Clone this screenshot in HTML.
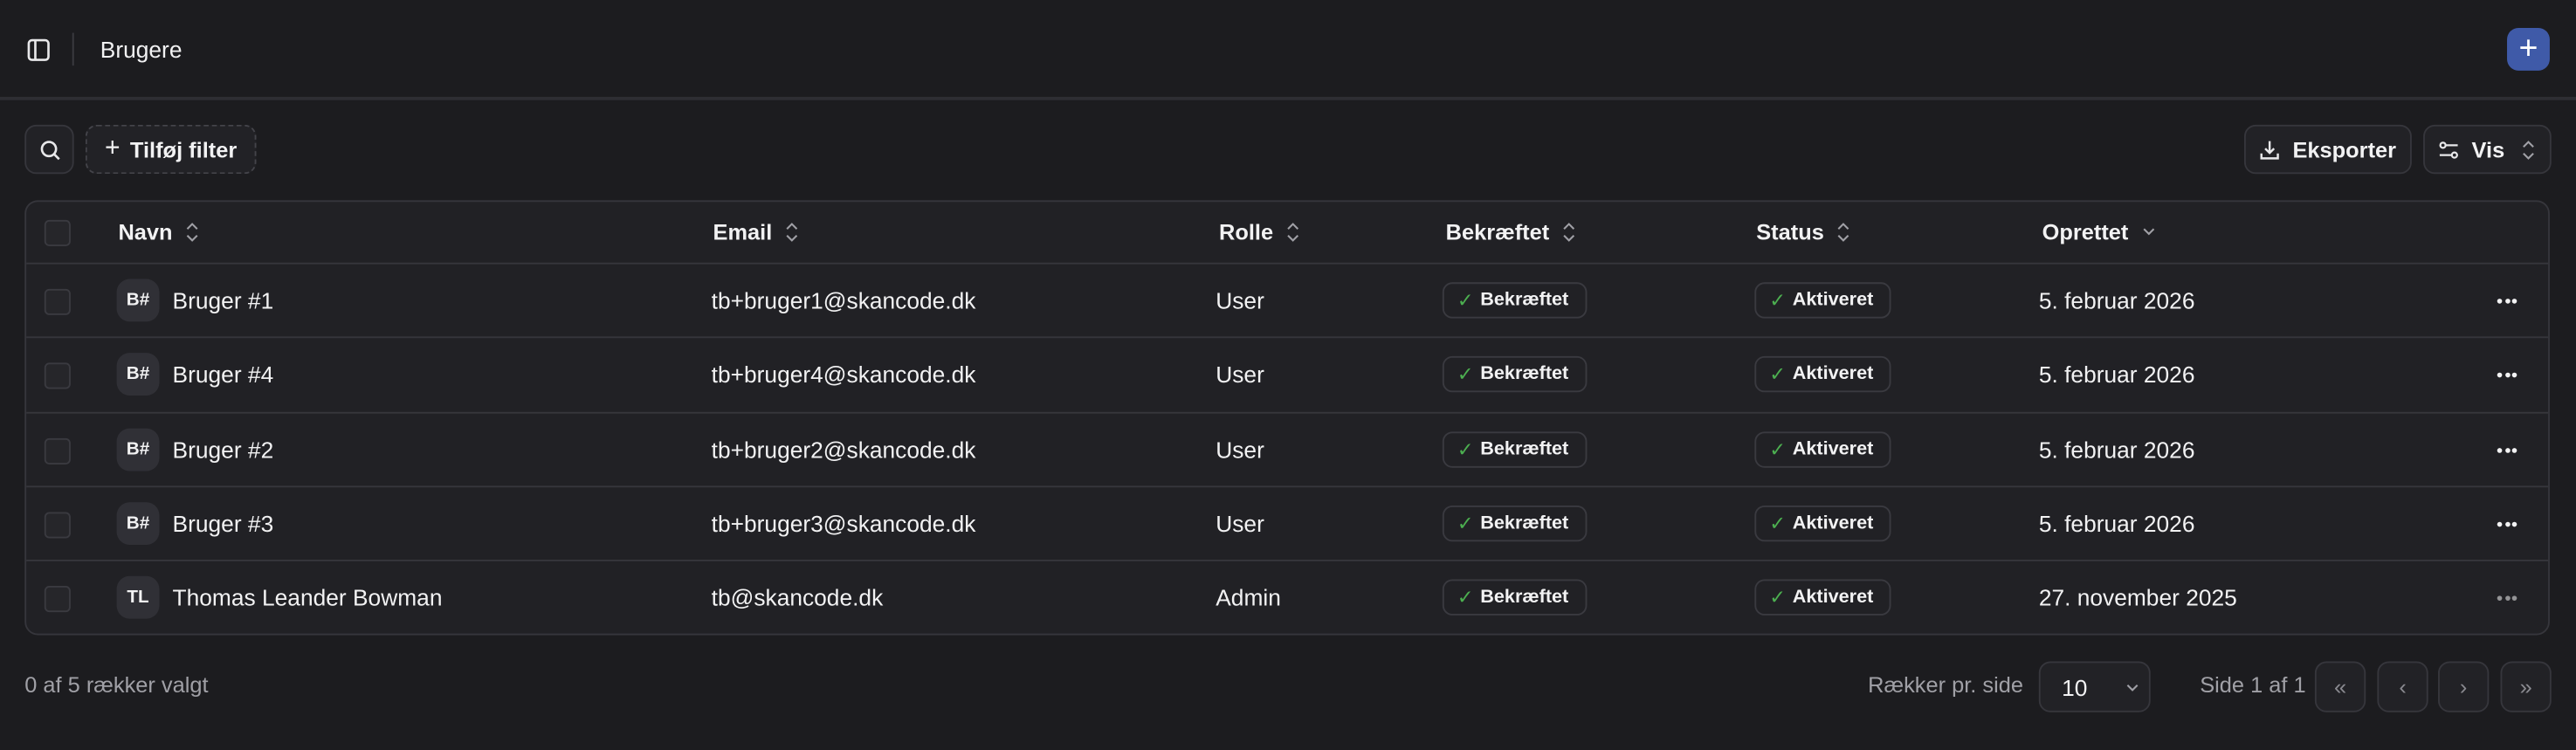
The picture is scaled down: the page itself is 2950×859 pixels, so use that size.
<!DOCTYPE html>
<html><head><meta charset="utf-8"><style>
html,body{margin:0;padding:0;background:#1c1c1f;overflow:hidden;width:2950px;height:859px}
#w{position:absolute;left:0;top:0;width:1568px;height:457px;transform:scale(1.8814,1.8797);transform-origin:0 0;font-family:"Liberation Sans",sans-serif;color:#f2f2f3;font-size:14px}
.a{position:absolute}
.btn{position:absolute;border:1px solid #36363c;background:#222226;border-radius:7px;box-sizing:border-box;display:flex;align-items:center;justify-content:center;font-weight:bold;font-size:13.5px}
.tbl{position:absolute;left:15px;top:122px;width:1537px;height:265px;border:1px solid #36363c;border-radius:8px;background:#212125;box-sizing:border-box;overflow:hidden}
.row{position:absolute;left:0;width:100%;border-top:1px solid #36363c;box-sizing:border-box}
.cb{position:absolute;left:11px;width:14px;height:14px;border:1px solid #3a3a40;border-radius:3px;background:#26262a}
.t{position:absolute;white-space:nowrap}
.av{position:absolute;left:55px;width:26px;height:26px;border-radius:8px;background:#303036;font-size:11px;font-weight:bold;display:flex;align-items:center;justify-content:center}
.bd{position:absolute;height:22px;border:1px solid #3a3a40;border-radius:6px;box-sizing:border-box;font-size:11.5px;font-weight:bold;display:flex;align-items:center;padding-left:8px;gap:4px}
.ck{color:#4caf50;font-weight:normal;font-size:12px}
.dots{position:absolute;left:1504px;width:12px;height:4px;display:flex;justify-content:space-between}
.dots i{width:3px;height:3px;border-radius:50%;background:#f2f2f3;display:block}
.hd{color:#f2f2f3;font-weight:bold;font-size:13.5px;display:flex;align-items:center}
.hd svg{margin-left:7px}
</style></head><body><div id="w">
<svg width="0" height="0" style="position:absolute"><defs><g id="ud"><path d="M2 4.5L5 1.5 8 4.5M2 8.5L5 11.5 8 8.5" fill="none" stroke="#a0a0a6" stroke-width="1.1"/></g></defs></svg>
<!-- header -->
<svg class="a" style="left:16px;top:23px" width="15" height="15" viewBox="0 0 15 15" fill="none" stroke="#e8e8ea" stroke-width="1.4"><rect x="1.5" y="1.5" width="12" height="12" rx="2"/><line x1="5.5" y1="1.5" x2="5.5" y2="13.5"/></svg>
<div class="a" style="left:44px;top:20px;width:1px;height:20px;background:#3a3a40"></div>
<div class="t" style="left:61px;top:22px;font-size:14px">Brugere</div>
<div class="a" style="left:1526px;top:17px;width:26px;height:26px;border-radius:7px;background:#3f5aa8;display:flex;align-items:center;justify-content:center;font-size:20px;color:#fff">+</div>
<div class="a" style="left:0;top:59px;width:1568px;height:2px;background:#2e2e33"></div>
<!-- toolbar -->
<div class="btn" style="left:15px;top:76px;width:30px;height:30px"><svg width="13" height="13" viewBox="0 0 13 13" fill="none" stroke="#e8e8ea" stroke-width="1.4"><circle cx="5.8" cy="5.8" r="4.3"/><line x1="9" y1="9" x2="12" y2="12"/></svg></div>
<div class="btn" style="left:52px;top:76px;width:104px;height:30px;border-style:dashed;border-color:#44444a"><span style="font-weight:normal;font-size:16px;margin-right:6px">+</span>Tilføj filter</div>
<div class="btn" style="left:1366px;top:76px;width:102px;height:30px"><svg width="13" height="13" viewBox="0 0 13 13" fill="none" stroke="#e8e8ea" stroke-width="1.3" style="margin-right:7px"><path d="M6.5 1v7M3.8 5.5l2.7 2.7 2.7-2.7M1.5 8.5v3h10v-3"/></svg>Eksporter</div>
<div class="btn" style="left:1475px;top:76px;width:78px;height:30px"><svg width="13" height="13" viewBox="0 0 13 13" fill="none" stroke="#e8e8ea" stroke-width="1.2" style="margin-right:7px"><circle cx="3" cy="3.5" r="1.6"/><line x1="5" y1="3.5" x2="12" y2="3.5"/><circle cx="10" cy="9.5" r="1.6"/><line x1="1" y1="9.5" x2="8" y2="9.5"/></svg>Vis<svg width="10" height="13" style="margin-left:9px"><use href="#ud"/></svg></div>
<!-- table -->
<div class="tbl">
 <div class="cb" style="top:11px"></div>
 <div class="t hd" style="left:56px;top:11px">Navn<svg width="10" height="13"><use href="#ud"/></svg></div>
 <div class="t hd" style="left:418px;top:11px">Email<svg width="10" height="13"><use href="#ud"/></svg></div>
 <div class="t hd" style="left:726px;top:11px">Rolle<svg width="10" height="13"><use href="#ud"/></svg></div>
 <div class="t hd" style="left:864px;top:11px">Bekræftet<svg width="10" height="13"><use href="#ud"/></svg></div>
 <div class="t hd" style="left:1053px;top:11px">Status<svg width="10" height="13"><use href="#ud"/></svg></div>
 <div class="t hd" style="left:1227px;top:11px">Oprettet<svg width="10" height="13"><path d="M2 4.5L5 7.5 8 4.5" fill="none" stroke="#a0a0a6" stroke-width="1.1"/></svg></div>

 <div class="row" style="top:37px;height:46px"><div class="cb" style="top:15px"></div><div class="av" style="top:9px">B#</div><div class="t" style="left:89px;top:14px">Bruger #1</div><div class="t" style="left:417px;top:14px">tb+bruger1@skancode.dk</div><div class="t" style="left:724px;top:14px">User</div><div class="bd" style="left:862px;top:11px;width:88px"><span class="ck">✓</span>Bekræftet</div><div class="bd" style="left:1052px;top:11px;width:83px"><span class="ck">✓</span>Aktiveret</div><div class="t" style="left:1225px;top:14px">5. februar 2026</div><div class="dots" style="top:21px"><i></i><i></i><i></i></div></div>
 <div class="row" style="top:82px;height:46px"><div class="cb" style="top:15px"></div><div class="av" style="top:9px">B#</div><div class="t" style="left:89px;top:14px">Bruger #4</div><div class="t" style="left:417px;top:14px">tb+bruger4@skancode.dk</div><div class="t" style="left:724px;top:14px">User</div><div class="bd" style="left:862px;top:11px;width:88px"><span class="ck">✓</span>Bekræftet</div><div class="bd" style="left:1052px;top:11px;width:83px"><span class="ck">✓</span>Aktiveret</div><div class="t" style="left:1225px;top:14px">5. februar 2026</div><div class="dots" style="top:21px"><i></i><i></i><i></i></div></div>
 <div class="row" style="top:128px;height:46px"><div class="cb" style="top:15px"></div><div class="av" style="top:9px">B#</div><div class="t" style="left:89px;top:14px">Bruger #2</div><div class="t" style="left:417px;top:14px">tb+bruger2@skancode.dk</div><div class="t" style="left:724px;top:14px">User</div><div class="bd" style="left:862px;top:11px;width:88px"><span class="ck">✓</span>Bekræftet</div><div class="bd" style="left:1052px;top:11px;width:83px"><span class="ck">✓</span>Aktiveret</div><div class="t" style="left:1225px;top:14px">5. februar 2026</div><div class="dots" style="top:21px"><i></i><i></i><i></i></div></div>
 <div class="row" style="top:173px;height:46px"><div class="cb" style="top:15px"></div><div class="av" style="top:9px">B#</div><div class="t" style="left:89px;top:14px">Bruger #3</div><div class="t" style="left:417px;top:14px">tb+bruger3@skancode.dk</div><div class="t" style="left:724px;top:14px">User</div><div class="bd" style="left:862px;top:11px;width:88px"><span class="ck">✓</span>Bekræftet</div><div class="bd" style="left:1052px;top:11px;width:83px"><span class="ck">✓</span>Aktiveret</div><div class="t" style="left:1225px;top:14px">5. februar 2026</div><div class="dots" style="top:21px"><i></i><i></i><i></i></div></div>
 <div class="row" style="top:218px;height:46px"><div class="cb" style="top:15px"></div><div class="av" style="top:9px">TL</div><div class="t" style="left:89px;top:14px">Thomas Leander Bowman</div><div class="t" style="left:417px;top:14px">tb@skancode.dk</div><div class="t" style="left:724px;top:14px">Admin</div><div class="bd" style="left:862px;top:11px;width:88px"><span class="ck">✓</span>Bekræftet</div><div class="bd" style="left:1052px;top:11px;width:83px"><span class="ck">✓</span>Aktiveret</div><div class="t" style="left:1225px;top:14px">27. november 2025</div><div class="dots" style="top:21px;opacity:.55"><i></i><i></i><i></i></div></div>
</div>
<!-- footer -->
<div class="t" style="left:15px;top:410px;color:#a0a0a6;font-size:13.5px">0 af 5 rækker valgt</div>
<div class="t" style="left:1137px;top:410px;color:#a0a0a6;font-size:13.5px">Rækker pr. side</div>
<div class="btn" style="left:1241px;top:403px;width:68px;height:31px;justify-content:flex-start;padding-left:13px;font-weight:normal;font-size:14px">10<svg width="10" height="10" style="margin-left:22px"><path d="M2 3.5L5 6.5 8 3.5" fill="none" stroke="#a0a0a6" stroke-width="1.1"/></svg></div>
<div class="t" style="left:1339px;top:410px;color:#a0a0a6;font-size:13.5px">Side 1 af 1</div>
<div class="btn" style="left:1409px;top:403px;width:31px;height:31px;color:#8a8a90;font-weight:normal">«</div>
<div class="btn" style="left:1447px;top:403px;width:31px;height:31px;color:#8a8a90;font-weight:normal">‹</div>
<div class="btn" style="left:1484px;top:403px;width:31px;height:31px;color:#8a8a90;font-weight:normal">›</div>
<div class="btn" style="left:1522px;top:403px;width:31px;height:31px;color:#8a8a90;font-weight:normal">»</div>
</div></body></html>
